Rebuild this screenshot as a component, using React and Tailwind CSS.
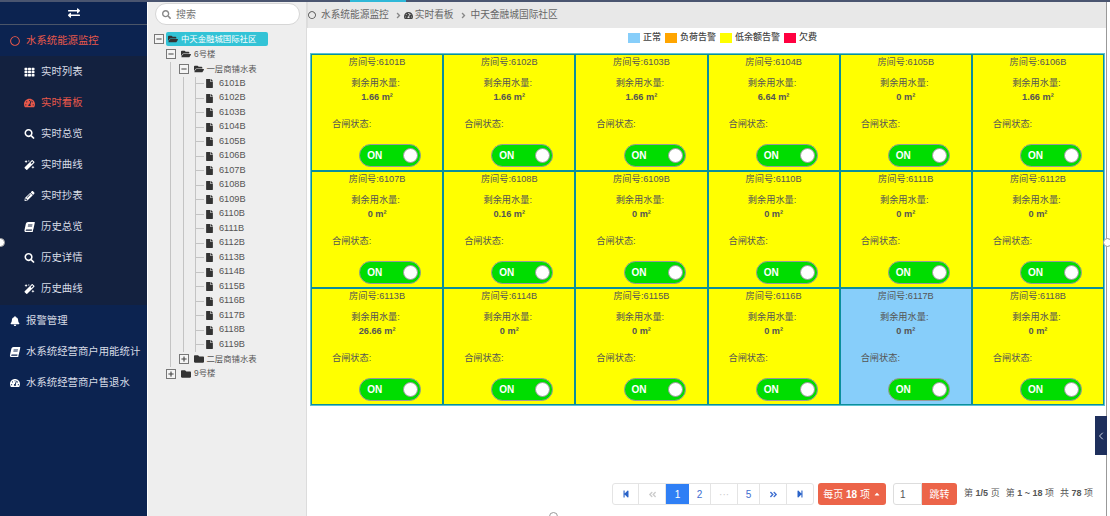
import {
  FaBell, FaBook, FaExchangeAlt, FaFile, FaFolder, FaFolderOpen, FaMagic, FaPencilAlt, FaRegCircle,
  FaSearch, FaStepBackward, FaStepForward, FaTachometerAlt, FaTh, FaAngleRight, FaAngleDoubleLeft,
  FaAngleDoubleRight, FaCaretUp, FaMinus, FaPlus,
} from 'react-icons/fa'
import { ChevronLeft } from 'lucide-react'

const subMenu = [
  { label: '实时列表', icon: FaTh },
  { label: '实时看板', icon: FaTachometerAlt, active: true },
  { label: '实时总览', icon: FaSearch },
  { label: '实时曲线', icon: FaMagic },
  { label: '实时抄表', icon: FaPencilAlt },
  { label: '历史总览', icon: FaBook, slant: true },
  { label: '历史详情', icon: FaSearch },
  { label: '历史曲线', icon: FaMagic },
]

const topMenu = [
  { label: '报警管理', icon: FaBell },
  { label: '水系统经营商户用能统计', icon: FaBook, slant: true },
  { label: '水系统经营商户售退水', icon: FaTachometerAlt },
]

const leaves = ['6101B', '6102B', '6103B', '6104B', '6105B', '6106B', '6107B', '6108B', '6109B', '6110B', '6111B', '6112B', '6113B', '6114B', '6115B', '6116B', '6117B', '6118B', '6119B']

const rooms = [
  ['6101B', '1.66'], ['6102B', '1.66'], ['6103B', '1.66'], ['6104B', '6.64'], ['6105B', '0'], ['6106B', '1.66'],
  ['6107B', '0'], ['6108B', '0.16'], ['6109B', '0'], ['6110B', '0'], ['6111B', '0'], ['6112B', '0'],
  ['6113B', '26.66'], ['6114B', '0'], ['6115B', '0'], ['6116B', '0'], ['6117B', '0', true], ['6118B', '0'],
]

function Sidebar() {
  return (
    <aside className="flex w-[147px] shrink-0 flex-col bg-[#0c2350] text-[10.4px] text-[#d8dce6]">
      <div className="flex h-[23px] items-center justify-center border-b border-[#4b5568] text-white">
        <FaExchangeAlt className="text-[12px]" />
      </div>
      <div className="flex h-[31px] items-center gap-[6px] pl-[10px] text-[#e8584a]">
        <FaRegCircle className="text-[10px]" />
        <span>水系统能源监控</span>
      </div>
      <div className="bg-[#13213f] pb-[1px]">
        {subMenu.map((item) => (
          <div key={item.label} className={`flex h-[31px] items-center gap-[6px] pl-[24px] ${item.active ? 'text-[#e8584a]' : ''}`}>
            <item.icon className={`w-[11px] text-[10px] ${item.active ? '' : 'text-white'} ${item.slant ? '-skew-x-12' : ''}`} />
            <span>{item.label}</span>
          </div>
        ))}
      </div>
      {topMenu.map((item) => (
        <div key={item.label} className="flex h-[31px] items-center gap-[6px] pl-[10px]">
          <item.icon className={`w-[10px] text-[10px] text-white ${item.slant ? '-skew-x-12' : ''}`} />
          <span className="whitespace-nowrap">{item.label}</span>
        </div>
      ))}
    </aside>
  )
}

function ToggleBox({ open }) {
  return (
    <span className="flex h-[10px] w-[10px] shrink-0 items-center justify-center border border-[#777] bg-[#f4f4f4] text-[#444]">
      {open ? <FaMinus className="text-[6px]" /> : <FaPlus className="text-[6px]" />}
    </span>
  )
}

function Guide() {
  return <span className="ml-[4px] h-full w-[8.5px] shrink-0 border-l border-[#c4c4c4]" />
}

function TreePanel() {
  return (
    <div className="flex w-[159px] shrink-0 flex-col border-r border-[#dcdcdc] bg-[#eeeeee] text-[8.4px] text-[#555]">
      <div className="ml-[7px] mt-[1px] flex h-[22px] w-[145px] items-center gap-[5px] rounded-full border border-[#d6d6d6] bg-white pl-[6px] text-[10px] text-[#777]">
        <FaSearch className="text-[9px] text-[#888]" />
        <span>搜索</span>
      </div>
      <div className="mt-[6.5px] pl-[6px]">
        <div className="flex h-[15px] items-center">
          <ToggleBox open />
          <span className="ml-[2px] flex h-[14px] w-[102px] items-center gap-[3px] rounded-[2px] bg-[#33c3d6] pl-[2px] text-white">
            <FaFolderOpen className="text-[10px] text-[#333]" />
            <span>中天金融城国际社区</span>
          </span>
        </div>
        <div className="flex h-[15px] items-center pl-[12px]">
          <ToggleBox open />
          <FaFolderOpen className="ml-[5px] text-[10px] text-[#333]" />
          <span className="ml-[3px]">6号楼</span>
        </div>
        <div className="flex h-[15px] items-center pl-[12px]">
          <Guide />
          <ToggleBox open />
          <FaFolderOpen className="ml-[5px] text-[10px] text-[#333]" />
          <span className="ml-[3px]">一层商铺水表</span>
        </div>
        {leaves.map((leaf) => (
          <div key={leaf} className="flex h-[14.5px] items-center pl-[12px]">
            <Guide />
            <Guide />
            <span className="ml-[4px] flex h-full w-[9px] shrink-0 items-center border-l border-[#c4c4c4]">
              <span className="h-px w-full bg-[#c4c4c4]" />
            </span>
            <FaFile className="ml-[1px] text-[9px] text-[#333]" />
            <span className="ml-[5px] text-[9.2px]">{leaf}</span>
          </div>
        ))}
        <div className="flex h-[14.5px] items-center pl-[12px]">
          <Guide />
          <ToggleBox />
          <FaFolder className="ml-[5px] text-[10px] text-[#333]" />
          <span className="ml-[3px]">二层商铺水表</span>
        </div>
        <div className="flex h-[14.5px] items-center pl-[12px]">
          <ToggleBox />
          <FaFolder className="ml-[5px] text-[10px] text-[#333]" />
          <span className="ml-[3px]">9号楼</span>
        </div>
      </div>
    </div>
  )
}

function Switch() {
  return (
    <div className="flex h-[23px] w-[62px] items-center justify-between rounded-full border-[1.5px] border-[#999999] bg-[#00dd00] pl-[7px] pr-[2px]">
      <span className="text-[10px] font-bold text-white">ON</span>
      <span className="h-[15px] w-[15px] rounded-full border border-[#999] bg-white" />
    </div>
  )
}

function RoomCell({ room, usage, normal }) {
  return (
    <div className={`flex h-[117px] flex-col items-center border border-[#0b8f9c] text-[9.2px] text-[#555] ${normal ? 'bg-[#87cefa]' : 'bg-[#ffff00]'}`}>
      <div className="mt-[1px] h-[13px] leading-[13px]">房间号:{room}</div>
      <div className="mt-[8px] h-[13px] pr-[3px] leading-[13px]">剩余用水量:</div>
      <div className="mt-[1px] h-[13px] font-bold leading-[13px]">{usage} m²</div>
      <div className="mt-[14px] h-[13px] w-full pl-[20px] leading-[13px]">合闸状态:</div>
      <div className="mt-[13px] flex w-full justify-end pr-[21px]">
        <Switch />
      </div>
    </div>
  )
}

function Legend({ color, label }) {
  return (
    <div className="flex items-center gap-[3px]">
      <span className={`h-[10px] w-[12px] ${color}`} />
      <span>{label}</span>
    </div>
  )
}

function Pagination() {
  const btn = 'flex h-full items-center justify-center border-r border-[#e4e4e4]'
  return (
    <div className="mt-auto mb-[11px] flex h-[22px] items-center justify-end pr-[13px] text-[10px] text-[#555]">
      <div className="flex h-full overflow-hidden rounded-[3px] border border-[#e4e4e4] bg-white text-[#3f6fd0]">
        <span className={`${btn} w-[26px]`}><FaStepBackward className="text-[8px] text-[#2a63c8]" /></span>
        <span className={`${btn} w-[27px] text-[#ccc]`}><FaAngleDoubleLeft className="text-[9px]" /></span>
        <span className="flex h-full w-[23px] items-center justify-center bg-[#2f7ff5] text-white">1</span>
        <span className={`${btn} w-[22px]`}>2</span>
        <span className={`${btn} w-[27px] text-[#ccc]`}>···</span>
        <span className={`${btn} w-[22px]`}>5</span>
        <span className={`${btn} w-[27px]`}><FaAngleDoubleRight className="text-[9px]" /></span>
        <span className="flex h-full w-[26px] items-center justify-center"><FaStepForward className="text-[8px] text-[#2a63c8]" /></span>
      </div>
      <div className="ml-[4px] flex h-full w-[68px] items-center justify-center gap-[3px] rounded-[3px] bg-[#ec6449] text-white">
        <span>每页 <b>18</b> 项</span>
        <FaCaretUp className="text-[8px]" />
      </div>
      <div className="ml-[7px] flex h-full w-[29px] items-center rounded-l-[3px] border border-[#ddd] bg-white pl-[6px]">1</div>
      <div className="flex h-full w-[35px] items-center justify-center rounded-r-[3px] bg-[#ec6449] text-white">跳转</div>
      <div className="ml-[7px] flex gap-[6px] whitespace-nowrap text-[9px]">
        <span>第 <b>1/5</b> 页</span>
        <span>第 <b>1 ~ 18</b> 项</span>
        <span>共 <b>78</b> 项</span>
      </div>
    </div>
  )
}

export default function App() {
  return (
    <div className="relative flex h-[516px] w-[1110px] flex-col overflow-hidden bg-white font-['Liberation_Sans','Noto_Sans_CJK_SC',sans-serif]">
      <div className="h-[2px] shrink-0 bg-[#4a5570] pl-[350px]">
        <div className="h-full w-[56px] bg-[#2fb8d8]" />
      </div>
      <div className="flex min-h-0 flex-1">
        <Sidebar />
        <div className="w-px shrink-0 bg-white" />
        <TreePanel />
        <main className="flex w-[800px] shrink-0 flex-col border-r border-[#999]">
          <div className="flex h-[26px] shrink-0 items-center gap-[5px] border-l border-[#ddd] bg-[#e8e8e8] text-[9.7px] text-[#666]">
            <FaRegCircle className="text-[8px] text-[#444]" />
            <span>水系统能源监控</span>
            <FaAngleRight className="text-[9px] text-[#888]" />
            <FaTachometerAlt className="-ml-[4px] text-[9px] text-[#444]" />
            <span className="-ml-[3px]">实时看板</span>
            <FaAngleRight className="text-[9px] text-[#888]" />
            <span className="-ml-[2px]">中天金融城国际社区</span>
          </div>
          <div className="flex h-[26px] shrink-0 items-center justify-center gap-[4px] pb-[6px] pl-[32px] text-[9px] font-medium text-[#444]">
            <Legend color="bg-[#87cefa]" label="正常" />
            <Legend color="bg-[#ffa500]" label="负荷告警" />
            <Legend color="bg-[#ffff00]" label="低余额告警" />
            <Legend color="bg-[#ff0040]" label="欠费" />
          </div>
          <div className="ml-[4px] grid w-[793px] grid-cols-6 outline outline-[#5bc0d0]">
            {rooms.map(([room, usage, normal]) => (
              <RoomCell key={room} room={room} usage={usage} normal={normal} />
            ))}
          </div>
          <Pagination />
        </main>
      </div>
      {/* resize handles and the collapse tab sit over the page */}
      <span className="absolute left-[-4px] top-[238px] h-[9px] w-[9px] rounded-full border border-[#999] bg-white" />
      <span className="absolute left-[1103px] top-[238px] h-[9px] w-[9px] rounded-full border border-[#999] bg-white" />
      <span className="absolute left-[549px] top-[512px] h-[9px] w-[9px] rounded-full border border-[#999] bg-white" />
      <div className="absolute left-[1095px] top-[416px] flex h-[39px] w-[12px] items-center justify-center bg-[#1e2f5c] text-[#cfd6e4]">
        <ChevronLeft size={14} />
      </div>
    </div>
  )
}
